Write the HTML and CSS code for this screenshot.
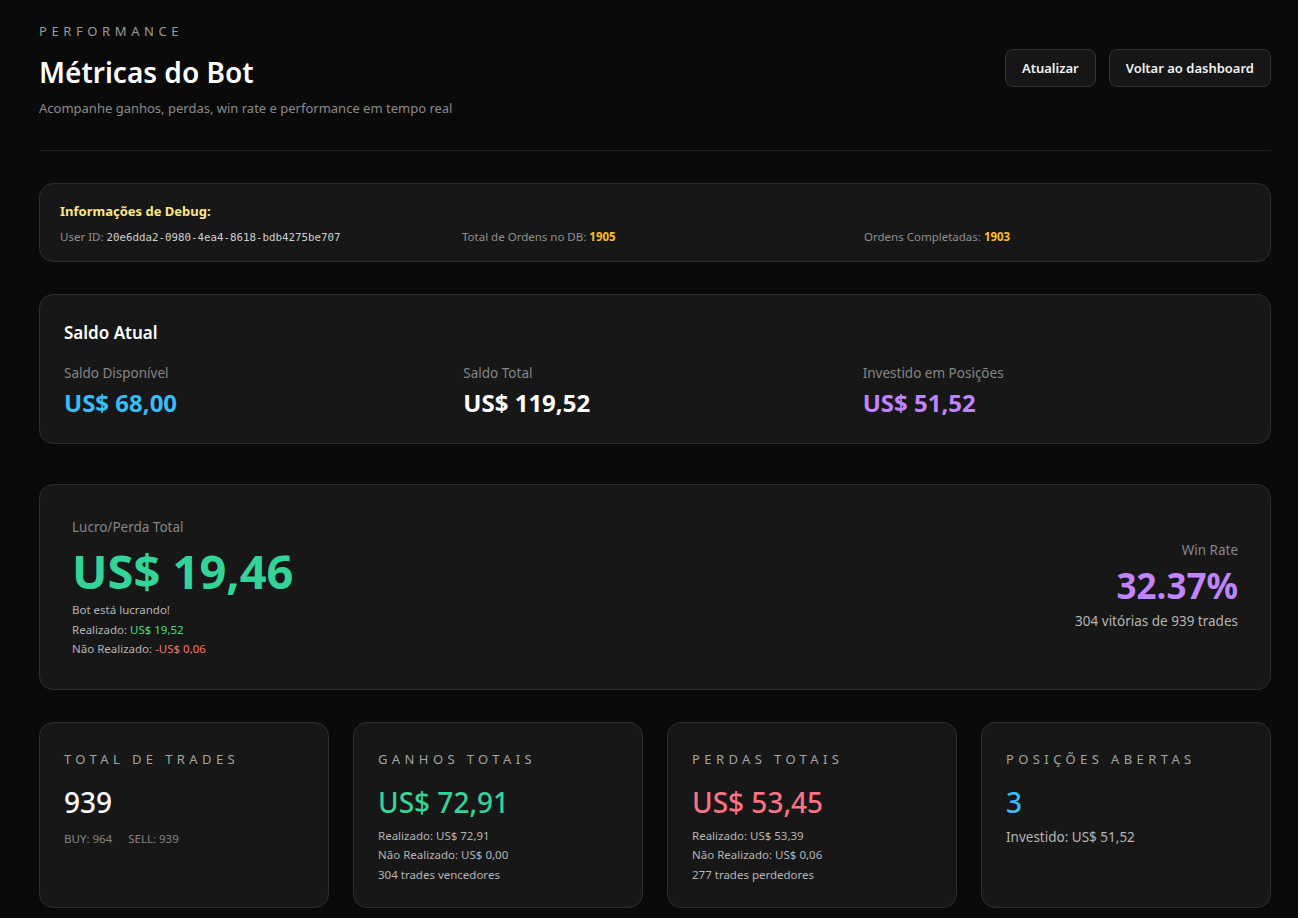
FILE: index.html
```html
<!DOCTYPE html>
<html lang="pt-BR">

<head>
    <meta charset="UTF-8">
    <title>Métricas do Bot</title>
    <link rel="stylesheet" href="styles.css">
</head>

<body>
    <div class="page">
        <header class="header">
            <div class="header-text">
                <div class="eyebrow">Performance</div>
                <h1>Métricas do Bot</h1>
                <p class="subtitle">Acompanhe ganhos, perdas, win rate e performance em tempo real</p>
            </div>
            <div class="actions">
                <button class="btn">Atualizar</button>
                <button class="btn">Voltar ao dashboard</button>
            </div>
        </header>

        <section class="card debug">
            <div class="debug-title">Informações de Debug:</div>
            <div class="debug-grid">
                <div>User ID: <span class="mono">20e6dda2-0980-4ea4-8618-bdb4275be707</span></div>
                <div>Total de Ordens no DB: <strong class="amber">1905</strong></div>
                <div>Ordens Completadas: <strong class="amber">1903</strong></div>
            </div>
        </section>

        <section class="card balance">
            <h2>Saldo Atual</h2>
            <div class="balance-grid">
                <div>
                    <div class="label">Saldo Disponível</div>
                    <div class="balance-value blue">US$ 68,00</div>
                </div>
                <div>
                    <div class="label">Saldo Total</div>
                    <div class="balance-value">US$ 119,52</div>
                </div>
                <div>
                    <div class="label">Investido em Posições</div>
                    <div class="balance-value purple">US$ 51,52</div>
                </div>
            </div>
        </section>

        <section class="card pnl">
            <div class="pnl-main">
                <div class="label">Lucro/Perda Total</div>
                <div class="pnl-value green">US$ 19,46</div>
                <div class="small-lines">
                    <div>Bot está lucrando!</div>
                    <div>Realizado: <span class="green-light">US$ 19,52</span></div>
                    <div>Não Realizado: <span class="red">-US$ 0,06</span></div>
                </div>
            </div>
            <div class="winrate">
                <div class="label">Win Rate</div>
                <div class="winrate-value purple">32.37%</div>
                <div class="winrate-sub">304 vitórias de 939 trades</div>
            </div>
        </section>

        <section class="stats">
            <div class="card stat">
                <div class="stat-label">Total de Trades</div>
                <div class="stat-value">939</div>
                <div class="stat-split">
                    <span>BUY: 964</span>
                    <span>SELL: 939</span>
                </div>
            </div>
            <div class="card stat">
                <div class="stat-label">Ganhos Totais</div>
                <div class="stat-value green">US$ 72,91</div>
                <div class="small-lines">
                    <div>Realizado: US$ 72,91</div>
                    <div>Não Realizado: US$ 0,00</div>
                    <div>304 trades vencedores</div>
                </div>
            </div>
            <div class="card stat">
                <div class="stat-label">Perdas Totais</div>
                <div class="stat-value rose">US$ 53,45</div>
                <div class="small-lines">
                    <div>Realizado: US$ 53,39</div>
                    <div>Não Realizado: US$ 0,06</div>
                    <div>277 trades perdedores</div>
                </div>
            </div>
            <div class="card stat">
                <div class="stat-label">Posições Abertas</div>
                <div class="stat-value blue">3</div>
                <div class="stat-note">Investido: US$ 51,52</div>
            </div>
        </section>
    </div>
</body>

</html>
```

FILE: styles.css
```css
body {
    margin: 0;
    background: #0a0a0a;
    color: #e5e5e5;
    font-family: 'Noto Sans', 'Open Sans', Arial, sans-serif;
}

.page {
    width: 1232px;
    padding: 22px 0 40px 39px;
}

.header {
    display: flex;
    justify-content: space-between;
    align-items: flex-start;
    padding-bottom: 32px;
    border-bottom: 1px solid #1f1f1f;
    margin-bottom: 32px;
}

.eyebrow {
    font-size: 13px;
    letter-spacing: 4.6px;
    text-transform: uppercase;
    color: #9a9a9a;
    line-height: 18px;
}

h1 {
    font-size: 28px;
    font-weight: 600;
    color: #fff;
    margin: 14px 0 0;
    line-height: 36px;
}

.subtitle {
    font-size: 13px;
    color: #8a8a8a;
    margin: 8px 0 0;
    line-height: 20px;
}

.actions {
    display: flex;
    gap: 13px;
    margin-top: 27px;
}

.btn {
    font-family: inherit;
    font-size: 13px;
    font-weight: 600;
    color: #f2f2f2;
    background: #161616;
    border: 1px solid #333;
    border-radius: 8px;
    height: 38px;
    padding: 0 16px;
}

.card {
    background: #171717;
    border: 1px solid #2e2e2e;
    border-radius: 14px;
    box-sizing: border-box;
}

.debug {
    padding: 18px 20px 14px;
    margin-bottom: 32px;
}

.debug-title {
    font-size: 13px;
    font-weight: 700;
    color: #fde68a;
    line-height: 18px;
}

.debug-grid {
    display: grid;
    grid-template-columns: repeat(3, 1fr);
    gap: 16px;
    margin-top: 8px;
    font-size: 11.5px;
    color: #8f8f8f;
    line-height: 18px;
}

.mono {
    font-family: 'DejaVu Sans Mono', 'Liberation Mono', monospace;
    font-size: 10.8px;
    color: #cfcfcf;
}

.amber {
    color: #fbbf24;
}

.balance {
    padding: 26px 24px 24px;
    margin-bottom: 40px;
}

h2 {
    font-size: 17px;
    font-weight: 600;
    color: #fff;
    margin: 0;
    line-height: 24px;
}

.balance-grid {
    display: grid;
    grid-template-columns: repeat(3, 1fr);
    gap: 16px;
    margin-top: 18px;
}

.label {
    font-size: 13.5px;
    color: #858585;
    line-height: 20px;
}

.balance-value {
    font-size: 24px;
    font-weight: 700;
    color: #fff;
    line-height: 32px;
    margin-top: 4px;
}

.pnl {
    display: flex;
    justify-content: space-between;
    align-items: center;
    padding: 32px 32px 30px;
    margin-bottom: 32px;
}

.pnl-value {
    font-size: 47px;
    font-weight: 700;
    line-height: 56px;
    margin-top: 6px;
}

.small-lines {
    font-size: 11.5px;
    color: #b5b5b5;
    line-height: 19.5px;
}

.pnl .small-lines {
    margin-top: 1px;
}

.winrate {
    text-align: right;
    margin-top: -4px;
}

.winrate-value {
    font-size: 35px;
    font-weight: 700;
    line-height: 44px;
    margin-top: 4px;
}

.winrate-sub {
    font-size: 13.5px;
    color: #b5b5b5;
    line-height: 20px;
    margin-top: 3px;
}

.stats {
    display: grid;
    grid-template-columns: repeat(4, 1fr);
    gap: 24px;
}

.stat {
    padding: 27px 24px 20px;
    height: 186px;
}

.stat-label {
    font-size: 13px;
    letter-spacing: 4.4px;
    text-transform: uppercase;
    color: #a3a3a3;
    line-height: 18px;
}

.stat-value {
    font-size: 28px;
    font-weight: 500;
    color: #fff;
    line-height: 40px;
    margin-top: 14px;
}

.stat .small-lines {
    margin-top: 4px;
}

.stat-split {
    display: flex;
    gap: 16px;
    font-size: 11.5px;
    color: #858585;
    margin-top: 9px;
}

.stat-note {
    font-size: 13.5px;
    color: #b5b5b5;
    margin-top: 6px;
}

.blue {
    color: #38bdf8;
}

.purple {
    color: #c084fc;
}

.green {
    color: #34d399;
}

.green-light {
    color: #4ade80;
}

.red {
    color: #f87171;
}

.rose {
    color: #fb7185;
}
```
